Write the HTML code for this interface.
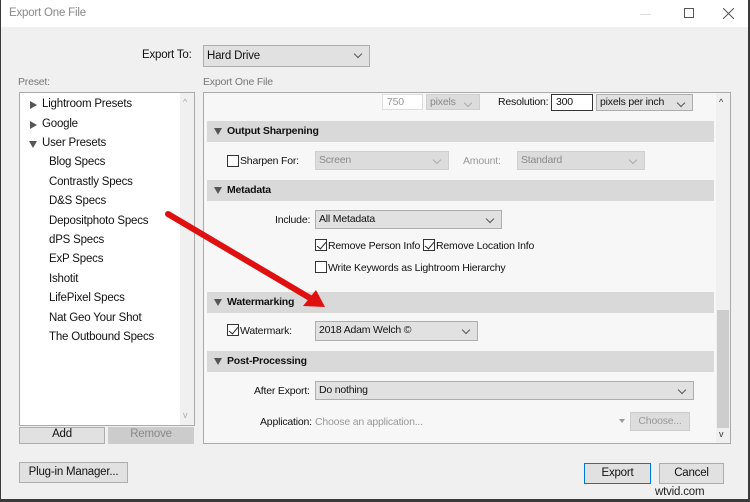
<!DOCTYPE html>
<html><head><style>
*{box-sizing:border-box;margin:0;padding:0}
body{width:750px;height:502px;background:#3a3a3a;font-family:"Liberation Sans",sans-serif;font-size:10.5px;color:#111;position:relative;overflow:hidden;letter-spacing:-0.2px}
div{white-space:nowrap}
.a{position:absolute}
.win{left:1px;top:0;width:747px;height:499px;background:#f0f0f0}
.title{left:1px;top:0;width:747px;height:27px;background:#fff}
.sel{position:absolute;background:#e1e1e1;border:1px solid #adadad;padding:2px 3px;font-size:10.5px}
.sel:after{content:"";position:absolute;right:8px;top:5px;width:5px;height:5px;border-right:1px solid #555;border-bottom:1px solid #555;transform:rotate(45deg)}
.dis{color:#8a8a8a;background:#dcdcdc;border-color:#cfcfcf}
.dis:after{border-color:#aaa}
.hdr{position:absolute;left:207px;width:507px;height:21px;background:#d9d9d9;font-weight:bold;font-size:10.5px;padding:4px 0 0 20px}
.hdr:before{content:"";position:absolute;left:7px;top:7px;border-left:4px solid transparent;border-right:4px solid transparent;border-top:7px solid #555}
.cb{position:absolute;width:12px;height:12px;border:1px solid #333;background:#fff}
.ck:after{content:"";position:absolute;left:3px;top:0px;width:4px;height:8px;border-right:1.5px solid #222;border-bottom:1.5px solid #222;transform:rotate(40deg)}
.li{position:absolute;font-size:11.5px}
.tri{position:absolute;border-top:4px solid transparent;border-bottom:4px solid transparent;border-left:7px solid #555}
.trid{position:absolute;border-left:4px solid transparent;border-right:4px solid transparent;border-top:7px solid #555}
.btn{position:absolute;background:#e1e1e1;border:1px solid #adadad;text-align:center;font-size:11.5px}
</style></head><body>
<div class="a win"></div>
<div class="a title"></div>
<div class="a" style="left:9px;top:7px;font-size:11.5px;color:#888">Export One File</div>
<div class="a" style="left:640px;top:14px;width:11px;height:1px;background:#ddd"></div>
<div class="a" style="left:684px;top:8px;width:10px;height:10px;border:1px solid #555"></div>
<svg class="a" style="left:723px;top:8px" width="11" height="11"><path d="M0 0L11 11M11 0L0 11" stroke="#555" stroke-width="1"/></svg>

<div class="a" style="left:142px;top:49px;font-size:11.5px">Export To:</div>
<div class="sel" style="left:203px;top:45px;width:167px;height:22px;font-size:11.5px;padding-top:4px">Hard Drive</div>
<div class="a" style="left:18px;top:76px;color:#777">Preset:</div>
<div class="a" style="left:203px;top:76px;color:#777">Export One File</div>

<div class="a" style="left:19px;top:92px;width:176px;height:334px;background:#fff;border:1px solid #aaa"></div>
<div class="a" style="left:180px;top:93px;width:14px;height:332px;background:#f0f0f0"></div>
<div class="a" style="left:183px;top:97px;font-size:9px;color:#aaa">^</div>
<div class="a" style="left:183px;top:410px;font-size:9px;color:#aaa">v</div>
<div class="tri" style="left:30px;top:101px"></div><div class="li" style="left:42px;top:98px">Lightroom Presets</div>
<div class="tri" style="left:30px;top:121px"></div><div class="li" style="left:42px;top:118px">Google</div>
<div class="trid" style="left:29px;top:141px"></div><div class="li" style="left:42px;top:137px">User Presets</div>
<div class="li" style="left:49px;top:156px">Blog Specs</div>
<div class="li" style="left:49px;top:176px">Contrastly Specs</div>
<div class="li" style="left:49px;top:195px">D&amp;S Specs</div>
<div class="li" style="left:49px;top:215px">Depositphoto Specs</div>
<div class="li" style="left:49px;top:234px">dPS Specs</div>
<div class="li" style="left:49px;top:253px">ExP Specs</div>
<div class="li" style="left:49px;top:273px">Ishotit</div>
<div class="li" style="left:49px;top:292px">LifePixel Specs</div>
<div class="li" style="left:49px;top:312px">Nat Geo Your Shot</div>
<div class="li" style="left:49px;top:331px">The Outbound Specs</div>
<div class="btn" style="left:19px;top:427px;width:86px;height:17px">Add</div>
<div class="btn" style="left:108px;top:427px;width:86px;height:17px;background:#ccc;border-color:#ccc;color:#888">Remove</div>
<div class="btn" style="left:19px;top:462px;width:109px;height:21px;padding-top:3px">Plug-in Manager...</div>

<div class="a" style="left:203px;top:92px;width:528px;height:352px;background:#f7f7f7;border:1px solid #aaa"></div>
<div class="a" style="left:716px;top:93px;width:14px;height:350px;background:#f0f0f0"></div>
<div class="a" style="left:717px;top:310px;width:12px;height:118px;background:#cdcdcd"></div>
<div class="a" style="left:719px;top:97px;font-size:9px;color:#333">^</div>
<div class="a" style="left:719px;top:429px;font-size:9px;color:#333">v</div>

<div class="a" style="left:382px;top:94px;width:41px;height:16px;background:#fff;border:1px solid #ddd;color:#999;padding:1px 4px">750</div>
<div class="sel dis" style="left:426px;top:94px;width:54px;height:16px;padding:1px 3px">pixels</div>
<div class="a" style="left:498px;top:96px">Resolution:</div>
<div class="a" style="left:551px;top:94px;width:42px;height:17px;background:#fff;border:1px solid #333;padding:1px 4px">300</div>
<div class="sel" style="left:596px;top:94px;width:97px;height:17px;padding:1px 3px">pixels per inch</div>

<div class="hdr" style="top:121px">Output Sharpening</div>
<div class="cb" style="left:227px;top:155px"></div>
<div class="a" style="left:240px;top:155px">Sharpen For:</div>
<div class="sel dis" style="left:315px;top:151px;width:134px;height:19px">Screen</div>
<div class="a" style="left:463px;top:155px;color:#999">Amount:</div>
<div class="sel dis" style="left:517px;top:151px;width:128px;height:19px">Standard</div>

<div class="hdr" style="top:180px">Metadata</div>
<div class="a" style="left:275px;top:214px">Include:</div>
<div class="sel" style="left:315px;top:210px;width:187px;height:19px">All Metadata</div>
<div class="cb ck" style="left:315px;top:239px"></div><div class="a" style="left:328px;top:240px">Remove Person Info</div>
<div class="cb ck" style="left:423px;top:239px"></div><div class="a" style="left:436px;top:240px">Remove Location Info</div>
<div class="cb" style="left:315px;top:261px"></div><div class="a" style="left:328px;top:262px">Write Keywords as Lightroom Hierarchy</div>

<div class="hdr" style="top:292px">Watermarking</div>
<div class="cb ck" style="left:227px;top:324px"></div>
<div class="a" style="left:240px;top:325px">Watermark:</div>
<div class="sel" style="left:315px;top:321px;width:163px;height:20px">2018 Adam Welch ©</div>

<div class="hdr" style="top:351px">Post-Processing</div>
<div class="a" style="left:254px;top:385px">After Export:</div>
<div class="sel" style="left:315px;top:381px;width:379px;height:19px">Do nothing</div>
<div class="a" style="left:260px;top:416px">Application:</div>
<div class="a" style="left:315px;top:416px;color:#999">Choose an application...</div>
<div class="trid" style="left:619px;top:419px;border-top-color:#999;border-width:4px 3px 0 3px"></div>
<div class="btn" style="left:630px;top:412px;width:60px;height:19px;background:#ddd;border-color:#ccc;color:#999;font-size:10.5px;padding-top:2px">Choose...</div>

<div class="btn" style="left:584px;top:463px;width:67px;height:21px;border:1px solid #0078d7;padding-top:3px">Export</div>
<div class="btn" style="left:659px;top:463px;width:65px;height:21px;padding-top:3px">Cancel</div>
<div class="a" style="left:655px;top:486px;font-size:11.5px;color:#222">wtvid.com</div>

<svg class="a" style="left:0;top:0" width="750" height="502">
<line x1="168" y1="214" x2="310" y2="298" stroke="#e01010" stroke-width="6" stroke-linecap="round"/>
<polygon points="325,307 303,306 316,290" fill="#e01010"/>
</svg>
</body></html>
